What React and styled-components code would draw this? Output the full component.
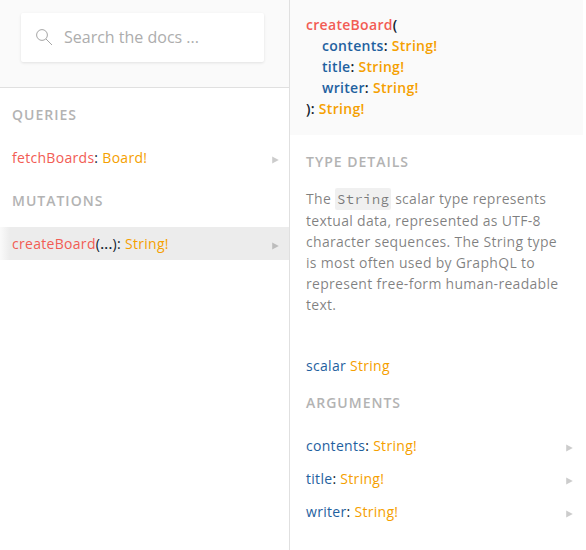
import React from "react";
import styled, { createGlobalStyle } from "styled-components";

const GlobalStyle = createGlobalStyle`
  * { box-sizing: border-box; }
  body {
    margin: 0;
    background: #fff;
    color: #0f202d;
    font-family: "Open Sans", sans-serif;
    font-size: 14px;
    letter-spacing: 0.3px;
    overflow: hidden;
  }
`;

const Explorer = styled.div`
  display: flex;
  width: 583px;
  height: 550px;
`;

const Column = styled.section`
  flex: ${(p) => (p.$grow ? "1" : "0 0 290px")};
  min-width: 0;
  border-right: ${(p) => (p.$grow ? "0" : "1px solid #e0e0e0")};
`;

const SearchArea = styled.div`
  height: 88px;
  padding: 13px 25px 0 21px;
  background: #fafafa;
  border-bottom: 1px solid #e0e0e0;
`;

const SearchBox = styled.label`
  display: flex;
  align-items: center;
  height: 49px;
  padding-left: 15px;
  background: #fff;
  border-radius: 2px;
  box-shadow: 0 1px 3px rgba(0, 0, 0, 0.1);
`;

const SearchIcon = styled.svg`
  width: 17px;
  height: 17px;
  margin-right: 11px;
  fill: none;
  stroke: #a5a5a5;
  stroke-width: 1;
`;

const SearchInput = styled.input`
  flex: 1;
  min-width: 0;
  padding: 0 0 2px;
  border: 0;
  outline: 0;
  background: transparent;
  font: 16px "Open Sans", sans-serif;
  letter-spacing: 0;
  &::placeholder { color: #adadad; opacity: 1; }
`;

const Heading = styled.h2`
  margin: 0;
  padding: 0 ${(p) => p.$inset}px;
  margin-top: 17px;
  margin-bottom: 17px;
  font-size: 14px;
  font-weight: 600;
  line-height: 19px;
  letter-spacing: 1px;
  text-transform: uppercase;
  color: #b3b3b3;
`;

const Row = styled.div`
  display: flex;
  align-items: center;
  justify-content: space-between;
  height: 33px;
  padding: 0 10px 0 ${(p) => p.$inset}px;
  line-height: 19px;
  background: ${(p) =>
    p.$active ? "linear-gradient(to right, #fafafa 0, #ececec 10px)" : "transparent"};
`;

const Arrow = styled.svg`
  width: 7px;
  height: 8px;
  margin-top: 5px;
  fill: rgba(0, 0, 0, 0.2);
`;

const Field = styled.span`color: #f25c54;`;
const Argument = styled.span`color: #1f61a0;`;
const Type = styled.span`color: #f5a000;`;
const Ellipsis = styled.span`font-weight: 600;`;

const Signature = styled.div`
  height: 135px;
  padding: 14px 16px;
  background: #fafafa;
  font-weight: 600;
  line-height: 21px;
`;

const SignatureLine = styled.div`
  padding-left: ${(p) => (p.$nested ? 16 : 0)}px;
`;

const Description = styled.p`
  margin: 0;
  padding: 0 16px;
  line-height: 21px;
  color: rgba(0, 0, 0, 0.5);
`;

const Code = styled.code`
  padding: 2px;
  border-radius: 2px;
  background: rgba(0, 0, 0, 0.06);
  font-family: "Source Code Pro", "DejaVu Sans Mono", monospace;
  font-size: 14px;
`;

const Definition = styled.div`
  margin-top: 40px;
  padding: 0 16px;
  line-height: 21px;
`;

const args = ["contents", "title", "writer"];

function RowArrow() {
  return (
    <Arrow viewBox="0 0 7 8">
      <path d="M0.2 0.5 L6.8 4 L0.2 7.5 Z" />
    </Arrow>
  );
}

function ArgumentType({ name }) {
  return (
    <span>
      <Argument>{name}</Argument>: <Type>String!</Type>
    </span>
  );
}

export default function App() {
  return (
    <>
      <GlobalStyle />
      <Explorer>
        <Column>
          <SearchArea>
            <SearchBox>
              <SearchIcon viewBox="0 0 17 17">
                <circle cx="6" cy="6" r="5.4" />
                <path d="M10 10 L16 16" />
              </SearchIcon>
              <SearchInput placeholder="Search the docs ..." />
            </SearchBox>
          </SearchArea>
          <Heading $inset={12}>Queries</Heading>
          <Row $inset={12}>
            <span><Field>fetchBoards</Field>: <Type>Board!</Type></span>
            <RowArrow />
          </Row>
          <Heading $inset={12}>Mutations</Heading>
          <Row $inset={12} $active>
            <span><Field>createBoard</Field>(<Ellipsis>...</Ellipsis>): <Type>String!</Type></span>
            <RowArrow />
          </Row>
        </Column>
        <Column $grow>
          <Signature>
            <SignatureLine><Field>createBoard</Field>(</SignatureLine>
            {args.map((name) => (
              <SignatureLine key={name} $nested><ArgumentType name={name} /></SignatureLine>
            ))}
            <SignatureLine>): <Type>String!</Type></SignatureLine>
          </Signature>
          <Heading $inset={16}>Type details</Heading>
          <Description>
            The <Code>String</Code> scalar type represents textual data, represented
            as UTF-8 character sequences. The String type is most often used by
            GraphQL to represent free-form human-readable text.
          </Description>
          <Definition><Argument>scalar</Argument> <Type>String</Type></Definition>
          <Heading $inset={16}>Arguments</Heading>
          {args.map((name) => (
            <Row key={name} $inset={16}>
              <ArgumentType name={name} />
              <RowArrow />
            </Row>
          ))}
        </Column>
      </Explorer>
    </>
  );
}
